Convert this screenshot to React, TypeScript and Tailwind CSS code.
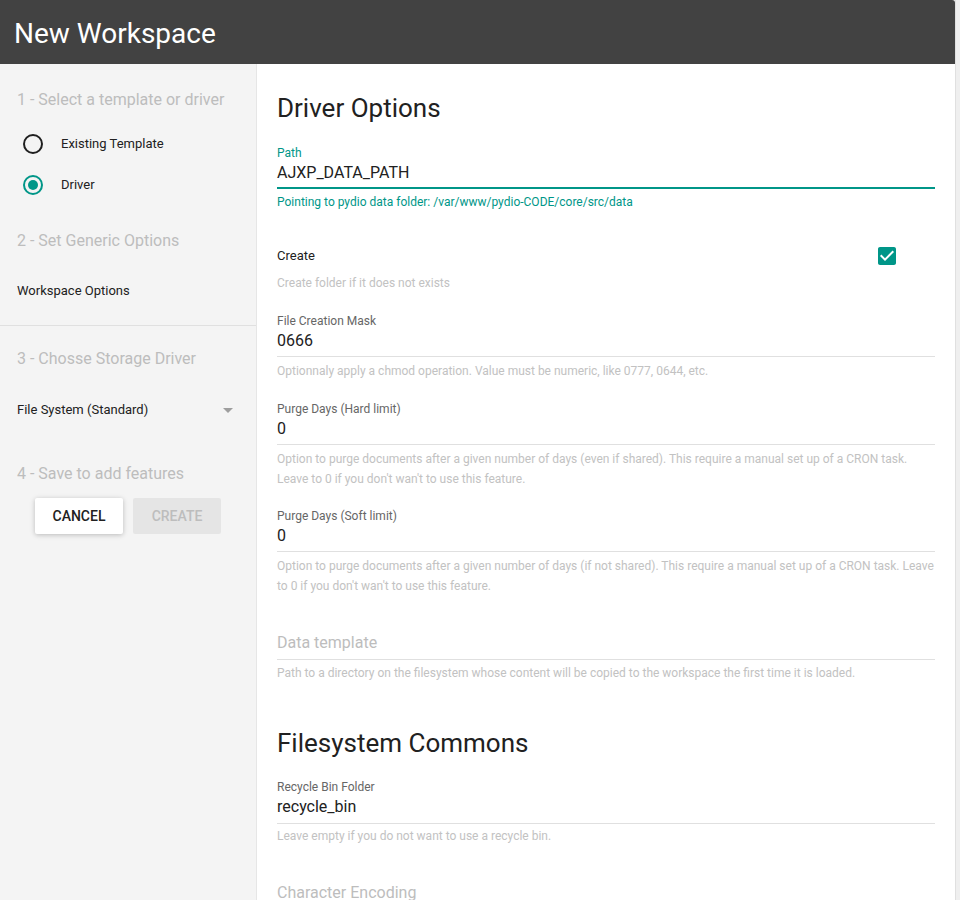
import React from "react";

const font = { fontFamily: "Roboto, 'Liberation Sans', sans-serif" };

function Subheader({ children, className = "" }: { children: React.ReactNode; className?: string }) {
  return (
    <div className={`h-12 leading-[48px] pl-[17px] text-[16px] text-[#bdbdbd] ${className}`}>{children}</div>
  );
}

function Field({
  label,
  value,
  helper,
  className = "",
}: {
  label: string;
  value: string;
  helper: React.ReactNode;
  className?: string;
}) {
  return (
    <div className={className}>
      <div className="h-4 leading-4 text-[12px] text-[#666666]">{label}</div>
      <div className="h-6 leading-6 text-[16px] text-[#212121]">{value}</div>
      <div className="mt-[3px] h-px bg-[#e0e0e0]" />
      <div className="mt-[4px] leading-5 text-[12px] text-[#c2c2c2]">{helper}</div>
    </div>
  );
}

export default function App() {
  return (
    <div className="w-[960px] h-[900px] overflow-hidden flex bg-[#eeeeee]" style={font}>
      <div className="w-[955px] h-[900px] flex flex-col shrink-0 overflow-hidden">
        <div className="h-[65px] shrink-0 bg-[#424242] rounded-tr-[3px] flex items-center pl-[14px] pt-1 border-b border-[#dcdcdc]">
          <span className="text-white text-[28px]">New Workspace</span>
        </div>
        <div className="flex flex-1 min-h-0 -mt-px">
          {/* Left panel */}
          <div className="w-[257px] shrink-0 bg-[#f4f4f4] border-r border-[#e6e6e6] pt-3">
            <Subheader>1 - Select a template or driver</Subheader>
            <div className="h-10 flex items-center pl-[23px]">
              <span className="w-5 h-5 rounded-full border-2 border-[#1f1f1f]" />
              <span className="ml-[18px] text-[13px] text-[#212121]">Existing Template</span>
            </div>
            <div className="h-[41px] flex items-center pl-[23px]">
              <span className="w-5 h-5 rounded-full border-2 border-[#009688] flex items-center justify-center">
                <span className="w-[10px] h-[10px] rounded-full bg-[#009688]" />
              </span>
              <span className="ml-[18px] text-[13px] text-[#212121]">Driver</span>
            </div>
            <Subheader className="mt-3">2 - Set Generic Options</Subheader>
            <div className="h-[52px] flex items-center pl-[17px] text-[13px] text-[#212121]">Workspace Options</div>
            <div className="mt-[8px] h-px bg-[#e0e0e0]" />
            <Subheader className="mt-[9px]">3 - Chosse Storage Driver</Subheader>
            <div className="h-[54px] flex items-center pl-[17px] pr-[23px] justify-between">
              <span className="text-[13px] text-[#212121]">File System (Standard)</span>
              <svg width="10" height="5" viewBox="0 0 10 5">
                <path d="M0 0 L10 0 L5 5 Z" fill="#9e9e9e" />
              </svg>
            </div>
            <Subheader className="mt-[13px]">4 - Save to add features</Subheader>
            <div className="flex justify-center gap-[10px]">
              <div className="w-[88px] h-9 bg-white rounded-[2px] shadow-[0_1px_6px_rgba(0,0,0,0.12),0_1px_4px_rgba(0,0,0,0.12)] flex items-center justify-center text-[14px] font-medium text-[#212121]">
                CANCEL
              </div>
              <div className="w-[88px] h-9 bg-[#e5e5e5] rounded-[2px] flex items-center justify-center text-[14px] font-medium text-[#bdbdbd]">
                CREATE
              </div>
            </div>
          </div>

          {/* Right panel */}
          <div className="flex-1 bg-white pl-5 pr-5">
            <div className="mt-5 h-12 leading-[48px] text-[26px] text-[#212121]">Driver Options</div>

            {/* Path */}
            <div className="mt-[13px]">
              <div className="h-4 leading-4 text-[12px] text-[#009688]">Path</div>
              <div className="h-6 leading-6 text-[16px] text-[#212121]">AJXP_DATA_PATH</div>
              <div className="mt-[2px] h-[2px] bg-[#009688]" />
              <div className="mt-[5px] h-4 leading-4 text-[12px] text-[#009688]">
                Pointing to pydio data folder: /var/www/pydio-CODE/core/src/data
              </div>
            </div>

            {/* Create */}
            <div className="mt-[34px] h-6 flex items-center justify-between pr-[36px]">
              <span className="text-[13px] text-[#212121]">Create</span>
              <svg width="24" height="24" viewBox="0 0 24 24">
                <path
                  d="M19 3H5c-1.11 0-2 .9-2 2v14c0 1.1.89 2 2 2h14c1.11 0 2-.9 2-2V5c0-1.1-.89-2-2-2zm-9 14l-5-5 1.41-1.41L10 14.17l7.59-7.59L19 8l-9 9z"
                  fill="#009688"
                />
              </svg>
            </div>
            <div className="mt-[7px] h-4 leading-4 text-[12px] text-[#c2c2c2]">Create folder if it does not exists</div>

            <Field
              className="mt-[22px]"
              label="File Creation Mask"
              value="0666"
              helper="Optionnaly apply a chmod operation. Value must be numeric, like 0777, 0644, etc."
            />
            <Field
              className="mt-[20px]"
              label="Purge Days (Hard limit)"
              value="0"
              helper="Option to purge documents after a given number of days (even if shared). This require a manual set up of a CRON task. Leave to 0 if you don't wan't to use this feature."
            />
            <Field
              className="mt-[19px]"
              label="Purge Days (Soft limit)"
              value="0"
              helper="Option to purge documents after a given number of days (if not shared). This require a manual set up of a CRON task. Leave to 0 if you don't wan't to use this feature."
            />

            {/* Data template */}
            <div className="mt-[35px]">
              <div className="h-6 leading-6 text-[16px] text-[#bdbdbd]">Data template</div>
              <div className="mt-[4px] h-px bg-[#e0e0e0]" />
              <div className="mt-[5px] h-4 leading-4 text-[12px] text-[#c2c2c2]">
                Path to a directory on the filesystem whose content will be copied to the workspace the first time it is loaded.
              </div>
            </div>

            <div className="mt-[38px] h-12 leading-[48px] text-[26px] text-[#212121]">Filesystem Commons</div>

            <div className="mt-[12px]">
              <div className="h-4 leading-4 text-[12px] text-[#666666]">Recycle Bin Folder</div>
              <div className="h-6 leading-6 text-[16px] text-[#212121]">recycle_bin</div>
              <div className="mt-[4px] h-px bg-[#e0e0e0]" />
              <div className="mt-[4px] h-4 leading-4 text-[12px] text-[#c2c2c2]">Leave empty if you do not want to use a recycle bin.</div>
            </div>

            <div className="mt-[37px] h-6 leading-6 text-[16px] text-[#bdbdbd]">Character Encoding</div>
          </div>
        </div>
      </div>
      <div className="flex-1 border-l border-[#e0e0e0] bg-[#efefef]" />
    </div>
  );
}
